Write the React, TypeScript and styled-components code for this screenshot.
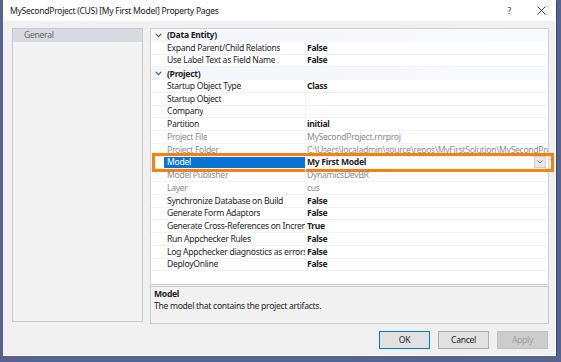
import React from "react";
import styled, { createGlobalStyle } from "styled-components";

const GlobalStyle = createGlobalStyle`
  html, body {
    margin: 0;
    padding: 0;
    background: #56638f;
    font-family: "Noto Sans", "Liberation Sans", sans-serif;
    letter-spacing: -0.3px;
  }
`;

type Row =
  | { kind: "cat"; label: string }
  | { kind: "prop"; name: string; value?: string; bold?: boolean; dim?: boolean; selected?: boolean };

const rows: Row[] = [
  { kind: "cat", label: "(Data Entity)" },
  { kind: "prop", name: "Expand Parent/Child Relations", value: "False", bold: true },
  { kind: "prop", name: "Use Label Text as Field Name", value: "False", bold: true },
  { kind: "cat", label: "(Project)" },
  { kind: "prop", name: "Startup Object Type", value: "Class", bold: true },
  { kind: "prop", name: "Startup Object" },
  { kind: "prop", name: "Company" },
  { kind: "prop", name: "Partition", value: "initial", bold: true },
  { kind: "prop", name: "Project File", value: "MySecondProject.rnrproj", dim: true },
  { kind: "prop", name: "Project Folder", value: "C:\\Users\\localadmin\\source\\repos\\MyFirstSolution\\MySecondProject", dim: true },
  { kind: "prop", name: "Model", value: "My First Model", bold: true, selected: true },
  { kind: "prop", name: "Model Publisher", value: "DynamicsDevBR", dim: true },
  { kind: "prop", name: "Layer", value: "cus", dim: true },
  { kind: "prop", name: "Synchronize Database on Build", value: "False", bold: true },
  { kind: "prop", name: "Generate Form Adaptors", value: "False", bold: true },
  { kind: "prop", name: "Generate Cross-References on Incremental Build", value: "True", bold: true },
  { kind: "prop", name: "Run Appchecker Rules", value: "False", bold: true },
  { kind: "prop", name: "Log Appchecker diagnostics as errors", value: "False", bold: true },
  { kind: "prop", name: "DeployOnline", value: "False", bold: true },
];

const Chevron = () => (
  <svg width="7" height="5" viewBox="0 0 7 5">
    <path d="M0.8 0.8 L3.5 3.6 L6.2 0.8" fill="none" stroke="#555" strokeWidth="1.1" />
  </svg>
);

const App: React.FC = () => {
  return (
    <>
      <GlobalStyle />
      <Window>
        <TitleBar>
          <Title>MySecondProject (CUS) [My First Model] Property Pages</Title>
          <TitleButtons>
            <Help>?</Help>
            <svg width="9" height="9" viewBox="0 0 9 9">
              <path d="M0.5 0.5 L8.5 8.5 M8.5 0.5 L0.5 8.5" stroke="#333" strokeWidth="0.9" />
            </svg>
          </TitleButtons>
        </TitleBar>
        <Body>
          <Main>
            <NavPanel>
              <NavItem $active>General</NavItem>
            </NavPanel>
            <RightColumn>
              <Grid>
                {rows.map((r, i) =>
                  r.kind === "cat" ? (
                    <CatRow key={i}>
                      <Margin>
                        <Chevron />
                      </Margin>
                      <CatLabel>{r.label}</CatLabel>
                    </CatRow>
                  ) : (
                    <PropRow key={i} $selected={r.selected}>
                      <Margin />
                      <NameCell $selected={r.selected} $dim={r.dim}>
                        <NameText>{r.name}</NameText>
                      </NameCell>
                      <ValueCell $bold={r.bold} $dim={r.dim}>
                        <ValueText>{r.value}</ValueText>
                        {r.selected && (
                          <DropButton>
                            <svg width="6" height="4" viewBox="0 0 6 4">
                              <path d="M0.5 0.5 L3 3 L5.5 0.5" fill="none" stroke="#777" strokeWidth="0.9" />
                            </svg>
                          </DropButton>
                        )}
                      </ValueCell>
                    </PropRow>
                  )
                )}
              </Grid>
              <Description>
                <DescTitle>Model</DescTitle>
                <DescText>The model that contains the project artifacts.</DescText>
              </Description>
            </RightColumn>
          </Main>
          <Footer>
            <Button $primary>OK</Button>
            <Button>Cancel</Button>
            <Button $disabled>Apply</Button>
          </Footer>
        </Body>
      </Window>
    </>
  );
};

export default App;

const Window = styled.div`
  margin-left: 3px;
  width: 552px;
  height: 355px;
  background: #f0f0f0;
  border-right: 1px solid #ffffff;
  border-bottom: 1px solid #ffffff;
  box-shadow: 1px 1px 0 #3b4468;
  display: flex;
  flex-direction: column;
`;

const TitleBar = styled.div`
  height: 21px;
  flex: none;
  background: #ffffff;
  display: flex;
  align-items: center;
  justify-content: space-between;
  padding: 0 9px 0 7px;
`;

const Title = styled.div`
  font-size: 8.6px;
  color: #1a1a1a;
`;

const TitleButtons = styled.div`
  display: flex;
  align-items: center;
  gap: 26px;
`;

const Help = styled.span`
  font-size: 8.5px;
  color: #333;
`;

const Body = styled.div`
  flex: 1;
  display: flex;
  flex-direction: column;
  padding: 7px 6px 0 9px;
`;

const Main = styled.div`
  display: flex;
  gap: 7px;
`;

const NavPanel = styled.div`
  flex: none;
  width: 129px;
  height: 292px;
  background: #f3f3f3;
  border: 1px solid #c9c9c9;
`;

const NavItem = styled.div<{ $active?: boolean }>`
  height: 13px;
  line-height: 13px;
  padding-left: 11px;
  font-size: 8.6px;
  color: #666;
  background: ${(p) => (p.$active ? "#d9d9e2" : "transparent")};
`;

const RightColumn = styled.div`
  flex: 1;
  min-width: 0;
  display: flex;
  flex-direction: column;
  gap: 1px;
`;

const Grid = styled.div`
  height: 255px;
  background: #ffffff;
  border: 1px solid #d2d2d2;
  border-bottom-color: #c9c9c9;
`;

const RowBase = styled.div`
  height: 12.75px;
  display: flex;
  align-items: stretch;
  font-size: 8.6px;
  box-sizing: border-box;
`;

const CatRow = styled(RowBase)`
  background: linear-gradient(to right, #f3f6fa, #f8fafd);
`;

const PropRow = styled(RowBase)<{ $selected?: boolean }>`
  position: relative;
  border-bottom: 1px solid #f1f3f6;
  ${(p) =>
    p.$selected &&
    `
    &::after {
      content: "";
      position: absolute;
      left: 1px;
      right: -6px;
      top: -4px;
      bottom: -4px;
      border: 3px solid #f7800e;
      pointer-events: none;
    }
  `}
`;

const Margin = styled.div`
  width: 13px;
  flex: none;
  display: flex;
  align-items: center;
  justify-content: center;
  padding-left: 2px;
  box-sizing: border-box;
`;

const CatLabel = styled.div`
  padding-left: 3px;
  font-weight: 700;
  color: #1e1e1e;
  display: flex;
  align-items: center;
`;

const NameCell = styled.div<{ $selected?: boolean; $dim?: boolean }>`
  width: 142px;
  flex: none;
  padding-left: 3px;
  box-sizing: border-box;
  display: flex;
  align-items: center;
  overflow: hidden;
  border-right: 1px solid #f1f3f6;
  background: ${(p) => (p.$selected ? "#0a74d4" : "transparent")};
  color: ${(p) => (p.$selected ? "#ffffff" : p.$dim ? "#8c8c8c" : "#1e1e1e")};
`;

const NameText = styled.span`
  min-width: 0;
  white-space: nowrap;
  overflow: hidden;
  text-overflow: clip;
`;

const ValueCell = styled.div<{ $bold?: boolean; $dim?: boolean }>`
  flex: 1;
  min-width: 0;
  display: flex;
  align-items: center;
  padding-left: 1px;
  font-weight: ${(p) => (p.$bold ? 700 : 400)};
  color: ${(p) => (p.$dim ? "#8c8c8c" : "#1e1e1e")};
`;

const ValueText = styled.span`
  flex: 1;
  min-width: 0;
  white-space: nowrap;
  overflow: hidden;
`;

const DropButton = styled.div`
  flex: none;
  width: 10px;
  height: 10px;
  margin-right: 2px;
  background: #e6e6e6;
  border: 1px solid #cfcfcf;
  display: flex;
  align-items: center;
  justify-content: center;
`;

const Description = styled.div`
  height: 38px;
  background: #f1f1f1;
  border: 1px solid #cbcbcb;
  padding: 2px 3px;
  box-sizing: border-box;
`;

const DescTitle = styled.div`
  font-size: 8.6px;
  font-weight: 700;
  color: #1e1e1e;
  line-height: 11px;
`;

const DescText = styled.div`
  font-size: 8.6px;
  color: #1e1e1e;
  line-height: 12px;
`;

const Footer = styled.div`
  display: flex;
  justify-content: flex-end;
  gap: 8px;
  margin-top: 7px;
  padding-right: 1px;
`;

const Button = styled.div<{ $primary?: boolean; $disabled?: boolean }>`
  width: 51px;
  height: 18px;
  box-sizing: border-box;
  display: flex;
  align-items: center;
  justify-content: center;
  font-size: 8.6px;
  background: ${(p) => (p.$disabled ? "#cccccc" : "#e1e1e1")};
  border: 1px solid ${(p) => (p.$primary ? "#0078d7" : p.$disabled ? "#bfbfbf" : "#adadad")};
  color: ${(p) => (p.$disabled ? "#a0a0a0" : "#1e1e1e")};
`;
